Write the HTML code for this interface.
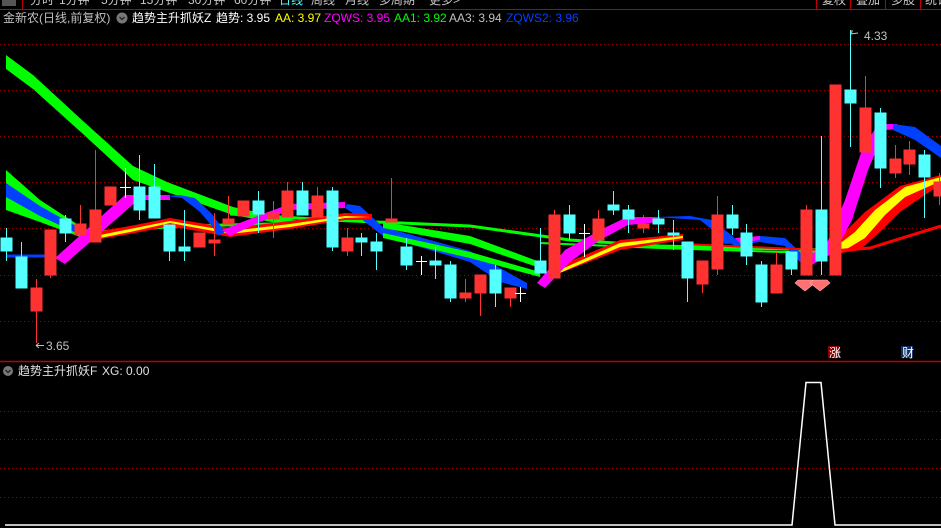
<!DOCTYPE html>
<html><head><meta charset="utf-8"><style>
html,body{margin:0;padding:0;background:#000;width:941px;height:528px;overflow:hidden}
svg{display:block}
text{font-family:"Liberation Sans","Noto Sans CJK SC",sans-serif;font-size:12px}
</style></head><body>
<svg width="941" height="528" viewBox="0 0 941 528" xmlns="http://www.w3.org/2000/svg">
<rect width="941" height="528" fill="#000"/>
<!-- top tabs -->
<g fill="#c8c8c8" font-size="12">
<text x="30" y="4">分时</text><text x="59" y="4">1分钟</text><text x="101" y="4">5分钟</text><text x="140" y="4">15分钟</text><text x="188" y="4">30分钟</text><text x="234" y="4">60分钟</text>
<text x="279" y="4" fill="#54ffff">日线</text>
<text x="311" y="4">周线</text><text x="345" y="4">月线</text><text x="379" y="4">多周期</text><text x="429" y="4">更多&gt;</text>
<text x="822" y="4">复权</text><text x="856" y="4">叠加</text><text x="891" y="4">多股</text><text x="925" y="4">统计</text>
</g>
<rect x="2" y="0" width="14" height="6" fill="#555"/>
<path d="M0 9.5H941M22.5 0V9M816.5 0V9M850.5 0V9M885.5 0V9M920.5 0V9" stroke="#c00000" stroke-width="1"/>
<!-- header row -->
<text x="3" y="22" fill="#c0c0c0">金新农(日线,前复权)</text>
<circle cx="122" cy="18" r="5.5" fill="#777"/><path d="M119.5 17l2.5 2.5 2.5-2.5" stroke="#222" fill="none" stroke-width="1.3"/>
<text x="132" y="22" fill="#fff">趋势主升抓妖Z</text>
<text x="216" y="22" fill="#fff">趋势: 3.95</text>
<text x="275" y="22" fill="#ffff00">AA: 3.97</text>
<text x="324" y="22" fill="#ff00ff">ZQWS: 3.95</text>
<text x="394" y="22" fill="#00ff00">AA1: 3.92</text>
<text x="449" y="22" fill="#c0c0c0">AA3: 3.94</text>
<text x="506" y="22" fill="#0040ff">ZQWS2: 3.96</text>
<!-- grid -->
<g stroke="#a00000" stroke-width="1" stroke-dasharray="1,3">
<path d="M0 44.5H941M0 90.5H941M0 136.5H941M0 182.5H941M0 228.5H941M0 275.5H941M0 321.5H941"/>
<path d="M0 411.5H941M0 439.5H941M0 468.5H941M0 497.5H941"/>
</g>
<!-- bands -->
<polygon points="6,55 33,75 83,121 133,166 167,182 233,207 300,221 300,227 233,215 167,192 133,180 83,134 33,89 6,69" fill="#00ff00"/>
<polyline points="230,214 330,220 470,226 570,240 660,246 820,250" fill="none" stroke="#00ff00" stroke-width="3"/>
<polyline points="540,243 660,248 780,252 820,252" fill="none" stroke="#00ff00" stroke-width="2"/>
<polygon points="6,170 40,200 83,228 83,238 40,222 6,210" fill="#00ff00"/>
<polygon points="6,183 40,206 83,230 83,236 40,216 6,197" fill="#0040ff"/>
<polyline points="83,233 180,226 270,224 345,218" fill="none" stroke="#00ff00" stroke-width="3"/>
<polygon points="347,204 360,206 383,227 470,251 500,268 527,283 527,289 500,282 470,262 383,236 360,218 345,208" fill="#0040ff"/>
<polygon points="383,222 470,236 540,262 540,268 470,244 383,228" fill="#00ff00"/>
<polygon points="383,233 470,252 540,272 540,277 470,258 383,238" fill="#00ff00"/>
<path d="M6 256H55" stroke="#0040ff" stroke-width="3"/>
<polygon points="95,232 130,226 170,218 230,228 290,221 345,213 372,214 372,220 345,220 290,229 230,237 170,226 130,234 95,240" fill="#ff0000"/>
<polygon points="100,235 130,229 170,221 230,231 290,224 345,216 370,217 345,218 290,227 230,234 170,223 130,232 100,238" fill="#ffff00"/>
<polygon points="55,258 125,195 170,195 170,200 138,200 65,264" fill="#ff00ff"/>
<polygon points="165,196 182,198 200,212 212,226 218,236 225,232 212,214 195,198 180,195" fill="#0040ff"/>
<polygon points="222,230 260,215 290,204 345,202 345,208 290,210 260,222 230,236" fill="#ff00ff"/>
<polygon points="550,270 620,240 683,234 683,240 620,250 550,277" fill="#ff0000"/>
<polygon points="555,272 620,243 683,236 683,238 620,247 555,275" fill="#ffff00"/>
<polygon points="537,283 565,250 600,230 627,217 660,217 660,222 628,225 600,240 570,262 545,288" fill="#ff00ff"/>
<polygon points="655,217 700,220 715,232 725,244 740,243 730,234 712,220 690,216" fill="#0040ff"/>
<polygon points="725,240 760,236 785,238 800,252 806,262 800,262 785,246 760,242 735,246" fill="#0040ff"/>
<polygon points="735,238 760,236 760,240 740,243" fill="#ff00ff"/>
<polyline points="683,244 820,250" fill="none" stroke="#ff0000" stroke-width="2"/>
<polygon points="820,250 845,232 865,212 900,186 941,175 941,184 900,212 880,232 860,250 835,254" fill="#ff0000"/>
<polygon points="830,251 855,232 875,210 905,187 941,177 941,181 905,197 885,215 865,238 840,253" fill="#ffff00"/>
<polyline points="820,252 870,248 941,226" fill="none" stroke="#ff0000" stroke-width="3"/>
<polygon points="800,258 825,248 845,200 862,150 878,124 897,124 897,129 885,130 868,170 852,220 835,252 810,266" fill="#ff00ff"/>
<polygon points="893,124 915,127 941,146 941,158 915,140 893,130" fill="#0040ff"/>
<!-- red candles -->
<g stroke="#ff3232" fill="#ff3232" stroke-width="1">
<path d="M36.5 279V343M50.5 230V278M80.5 205V235M95.5 150V242M214.5 213V256M228.5 196V224M273.5 201V238M287.5 182V217M317.5 187V217M347.5 228V256M391.5 178V222M465.5 279V302M480.5 275V316M510.5 288V307M554.5 210V278M598.5 210V240M643.5 215V233M702.5 261V293M717.5 196V275M776.5 252V293M806.5 205V275M865.5 76V152M895.5 145V178M909.5 141V175M939.5 173V205"/>
<rect x="31" y="288" width="11" height="23"/><rect x="45" y="230" width="11" height="45"/><rect x="75" y="224" width="11" height="11"/><rect x="90" y="210" width="11" height="32"/><rect x="105" y="187" width="11" height="18"/><rect x="194" y="233" width="11" height="14"/><rect x="209" y="240" width="11" height="3"/><rect x="223" y="219" width="11" height="5"/><rect x="238" y="201" width="11" height="15"/><rect x="268" y="213" width="11" height="6"/><rect x="282" y="191" width="11" height="26"/><rect x="312" y="196" width="11" height="21"/><rect x="342" y="238" width="11" height="13"/><rect x="386" y="219" width="11" height="3"/><rect x="460" y="293" width="11" height="5"/><rect x="475" y="275" width="11" height="18"/><rect x="505" y="288" width="11" height="10"/><rect x="549" y="215" width="11" height="63"/><rect x="593" y="219" width="11" height="21"/><rect x="638" y="224" width="11" height="4"/><rect x="697" y="261" width="11" height="23"/><rect x="712" y="215" width="11" height="54"/><rect x="771" y="265" width="11" height="28"/><rect x="801" y="210" width="11" height="65"/><rect x="830" y="85" width="11" height="190"/><rect x="860" y="108" width="11" height="44"/><rect x="890" y="159" width="11" height="14"/><rect x="904" y="150" width="11" height="14"/><rect x="934" y="182" width="11" height="14"/>
</g>
<!-- cyan candles -->
<g stroke="#54ffff" fill="#54ffff" stroke-width="1">
<path d="M6.5 228V261M21.5 242V288M65.5 215V242M139.5 155V220M154.5 164V218M169.5 225V261M184.5 210V261M258.5 191V233M302.5 182V215M332.5 187V251M361.5 233V256M376.5 233V270M406.5 238V270M435.5 247V279M450.5 261V302M495.5 265V307M540.5 228V273M569.5 205V240M613.5 191V215M628.5 205V233M658.5 210V233M673.5 220V250M687.5 242V302M732.5 205V235M746.5 224V265M761.5 261V307M791.5 252V275M821.5 136V275M850.5 30V147M880.5 108V188M924.5 150V218"/>
<rect x="1" y="238" width="11" height="13"/><rect x="16" y="257" width="11" height="31"/><rect x="60" y="219" width="11" height="14"/><rect x="134" y="187" width="11" height="23"/><rect x="149" y="187" width="11" height="31"/><rect x="164" y="225" width="11" height="26"/><rect x="179" y="247" width="11" height="4"/><rect x="253" y="201" width="11" height="13"/><rect x="297" y="191" width="11" height="24"/><rect x="327" y="191" width="11" height="56"/><rect x="356" y="238" width="11" height="4"/><rect x="371" y="242" width="11" height="9"/><rect x="401" y="247" width="11" height="18"/><rect x="430" y="261" width="11" height="4"/><rect x="445" y="265" width="11" height="33"/><rect x="490" y="270" width="11" height="23"/><rect x="535" y="261" width="11" height="12"/><rect x="564" y="215" width="11" height="18"/><rect x="608" y="205" width="11" height="5"/><rect x="623" y="210" width="11" height="9"/><rect x="653" y="219" width="11" height="5"/><rect x="668" y="233" width="11" height="2"/><rect x="682" y="242" width="11" height="36"/><rect x="727" y="215" width="11" height="13"/><rect x="741" y="233" width="11" height="23"/><rect x="756" y="265" width="11" height="37"/><rect x="786" y="252" width="11" height="17"/><rect x="816" y="210" width="11" height="51"/><rect x="845" y="90" width="11" height="13"/><rect x="875" y="113" width="11" height="55"/><rect x="919" y="155" width="11" height="22"/>
</g>
<!-- doji crosses -->
<path d="M120 187.5H131M125.5 168V198M416 261.5H427M421.5 256V275M515 293.5H526M520.5 287V302M579 233.5H590M584.5 224V257" stroke="#fff" stroke-width="1"/>
<!-- price labels -->
<path d="M36 345.5H44M36 345.5l3-2.5M36 345.5l3 2.5" stroke="#c0c0c0" fill="none"/>
<text x="46" y="350" fill="#c0c0c0">3.65</text>
<path d="M850.5 31H853M850.5 31l2 3M851 34l7-1" stroke="#c0c0c0" fill="none"/>
<text x="864" y="40" fill="#c0c0c0">4.33</text>
<!-- diamonds -->
<g fill="#ff7070" stroke="#ffb0b0" stroke-width="0.6">
<polygon points="798,280 812,280 815,283 805,291 795,283"/>
<polygon points="813,280 827,280 830,283 820,291 810,283"/>
</g>
<rect x="828" y="346" width="12" height="12" fill="#8a0000"/>
<text x="829" y="357" fill="#fff" font-size="10">涨</text>
<rect x="901" y="346" width="12" height="12" fill="#10306a"/>
<text x="902" y="357" fill="#fff" font-size="10">财</text>
<!-- separator -->
<path d="M0 361.5H941" stroke="#c00000" stroke-width="1.5"/>
<!-- sub indicator -->
<circle cx="8" cy="371" r="5" fill="#777"/><path d="M5.5 370l2.5 2.5 2.5-2.5" stroke="#222" fill="none" stroke-width="1.3"/>
<text x="18" y="375" fill="#e0e0e0">趋势主升抓妖F</text>
<text x="102" y="375" fill="#e0e0e0">XG: 0.00</text>
<polyline points="5,525 792,525 806,382.5 821,382.5 835,525 941,525" fill="none" stroke="#fff" stroke-width="1.5"/>
</svg>
</body></html>
